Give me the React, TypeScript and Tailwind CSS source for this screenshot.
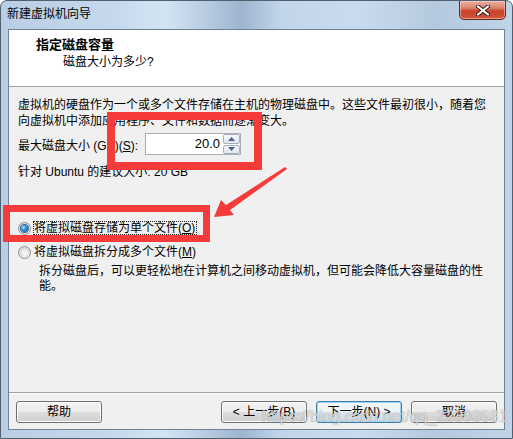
import React from "react";

function Radio({ checked }: { checked?: boolean }) {
  return (
    <span className="relative inline-block w-[13px] h-[13px] shrink-0 rounded-full border border-[#8e8f8f] bg-[radial-gradient(circle_at_60%_70%,#ffffff_0%,#eeeeee_40%,#cfcfcf_100%)]">
      <span className="absolute inset-[1px] rounded-full border border-[#d8d8d8]" />
      {checked && (
        <span className="absolute left-[2px] top-[2px] w-[7px] h-[7px] rounded-full bg-[radial-gradient(circle_at_35%_35%,#9fd8ff_0%,#2f8ad7_45%,#0b4c8e_100%)] shadow-[0_0_0_1px_#2a5f8f]" />
      )}
    </span>
  );
}

function Btn({ children, primary }: { children: React.ReactNode; primary?: boolean }) {
  return (
    <div
      className={
        primary
          ? "w-[86px] h-[22px] rounded-[3px] border border-[#3c7fb1] bg-[linear-gradient(to_bottom,#f4f9fc_0%,#eaf2f8_50%,#dbe6ee_51%,#cfdde8_100%)] shadow-[inset_0_0_0_1px_#9fd4f2] flex items-center justify-center text-[12px] leading-[14px] text-black"
          : "w-[86px] h-[22px] rounded-[3px] border border-[#707070] bg-[linear-gradient(to_bottom,#f2f2f2_0%,#ebebeb_50%,#dddddd_51%,#cfcfcf_100%)] shadow-[inset_0_0_0_1px_#fbfbfb] flex items-center justify-center text-[12px] leading-[14px] text-black"
      }
    >
      {children}
    </div>
  );
}

export default function App() {
  return (
    <div className="relative w-[513px] h-[439px] overflow-hidden rounded-t-[7px] border border-[#51606f] bg-[linear-gradient(to_right,#b9cee4_0%,#c6d9ec_22%,#d3e4f4_32%,#b9cde2_40%,#9db5cf_47%,#c2d6ea_55%,#c9dbee_70%,#b5c9de_85%,#c0d3e7_100%)] font-['Liberation_Sans','Noto_Sans_CJK_SC',sans-serif] text-[12px] text-black">
      {/* title bar */}
      <div className="h-[28px] flex items-center pl-[6px] pb-[2px] text-[12px] leading-[14px] text-black">
        新建虚拟机向导
      </div>

      {/* close button */}
      <div className="absolute left-[458px] top-[-1px] w-[47px] h-[20px] rounded-b-[5px] border border-[#5e2a22] bg-[linear-gradient(to_bottom,#eab0a3_0%,#d9806d_40%,#c8412a_55%,#d0583c_100%)] shadow-[inset_0_0_0_1px_rgba(255,220,210,0.5)] flex items-center justify-center">
        <svg width="14" height="11" viewBox="0 0 14 11">
          <path d="M2 1.5 L12 9.5 M12 1.5 L2 9.5" stroke="#3a1a14" strokeWidth="4" strokeLinecap="round" />
          <path d="M2 1.5 L12 9.5 M12 1.5 L2 9.5" stroke="#ffffff" strokeWidth="2.2" strokeLinecap="round" />
        </svg>
      </div>

      {/* client area */}
      <div className="ml-[7px] w-[497px] h-[401px] border border-[#6e8196] flex flex-col bg-[#f0f0f0]">
        {/* header */}
        <div className="h-[57px] shrink-0 bg-white border-b border-[#a0a0a0]">
          <div className="pl-[27px] pt-[7px] text-[13px] leading-[16px] font-bold">指定磁盘容量</div>
          <div className="pl-[54px] mt-[1px] text-[12px] leading-[16px]">磁盘大小为多少?</div>
        </div>

        {/* body */}
        <div className="flex-1 flex flex-col">
          <div className="pl-[9px] pt-[10px] leading-[16px] whitespace-nowrap">
            <div>虚拟机的硬盘作为一个或多个文件存储在主机的物理磁盘中。这些文件最初很小，随着您</div>
            <div>向虚拟机中添加应用程序、文件和数据而逐渐变大。</div>
          </div>

          <div className="flex items-center mt-[4px] h-[22px] pl-[9px]">
            <span className="w-[127px] leading-[16px] pt-[3px] whitespace-nowrap">
              最大磁盘大小 (GB)(<span className="underline">S</span>):
            </span>
            <div className="relative w-[96px] h-[22px] border border-[#abadb3] bg-white flex items-center">
              <span className="flex-1 text-right pr-[3px] text-[13px] leading-[16px]">20.0</span>
              <div className="w-[17px] h-[20px] flex flex-col gap-[1px]">
                <div className="flex-1 rounded-[2px] border border-[#a7afbd] bg-[linear-gradient(to_bottom,#f6f8fb,#dfe5ee)] flex items-center justify-center">
                  <svg width="7" height="4" viewBox="0 0 7 4"><path d="M0 4 L3.5 0 L7 4 Z" fill="#4d6288" /></svg>
                </div>
                <div className="flex-1 rounded-[2px] border border-[#a7afbd] bg-[linear-gradient(to_bottom,#f6f8fb,#dfe5ee)] flex items-center justify-center">
                  <svg width="7" height="4" viewBox="0 0 7 4"><path d="M0 0 L3.5 4 L7 0 Z" fill="#4d6288" /></svg>
                </div>
              </div>
            </div>
          </div>

          <div className="pl-[9px] mt-[9px] leading-[16px] whitespace-nowrap">
            针对 Ubuntu 的建议大小: 20 GB
          </div>

          <div className="flex items-center pl-[9px] mt-[40px] h-[16px]">
            <Radio checked />
            <span className="ml-[2px] border border-dotted border-[#222] leading-[12px] pr-[1px] whitespace-nowrap">
              将虚拟磁盘存储为单个文件(<span className="underline">O</span>)
            </span>
          </div>

          <div className="flex items-center pl-[9px] mt-[8px] h-[16px]">
            <Radio />
            <span className="ml-[3px] leading-[14px] whitespace-nowrap">
              将虚拟磁盘拆分成多个文件(<span className="underline">M</span>)
            </span>
          </div>

          <div className="pl-[30px] mt-[4px] leading-[15px] whitespace-nowrap">
            <div>拆分磁盘后，可以更轻松地在计算机之间移动虚拟机，但可能会降低大容量磁盘的性</div>
            <div>能。</div>
          </div>
        </div>

        {/* footer */}
        <div className="h-[37px] shrink-0 border-t border-[#a0a0a0] shadow-[inset_0_1px_0_#ffffff] flex items-start pt-[8px] pl-[7px] pr-[7px]">
          <Btn>帮助</Btn>
          <div className="flex-1" />
          <div className="flex gap-[9px]">
            <Btn>&lt; 上一步(B)</Btn>
            <Btn primary>下一步(N) &gt;</Btn>
            <Btn>取消</Btn>
          </div>
        </div>
      </div>

      {/* red annotation rectangles */}
      <div className="absolute left-[106px] top-[111px] w-[155px] h-[58px] border-[8px] border-[#f63b3b]" />
      <div className="absolute left-[2px] top-[204px] w-[207px] h-[37px] border-[7px] border-[#f63b3b]" />

      {/* red arrow */}
      <svg className="absolute left-0 top-0" width="513" height="439" viewBox="0 0 513 439">
        <polygon points="213,216 220,199 225,204 284,166 286,168 229,209 233,214" fill="#f63b3b" />
      </svg>

      {/* watermark */}
      <div className="absolute left-[261px] top-[406px] text-[16px] leading-[19px] font-['Liberation_Sans',sans-serif] text-[rgba(255,255,255,0.7)] [text-shadow:0_0_1px_rgba(80,80,80,0.7)] whitespace-nowrap">
        https://blog.csdn.net/qq_22303531
      </div>
    </div>
  );
}
